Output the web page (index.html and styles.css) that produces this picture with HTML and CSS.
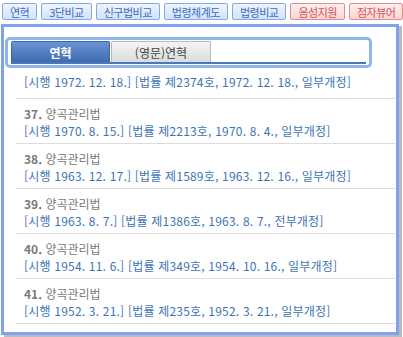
FILE: index.html
```html
<!DOCTYPE html>
<html lang="ko">
<head>
<meta charset="utf-8">
<link rel="stylesheet" href="styles.css">
</head>
<body>
<div class="toolbar">
  <span class="btn">연혁</span>
  <span class="btn">3단비교</span>
  <span class="btn">신구법비교</span>
  <span class="btn">법령체계도</span>
  <span class="btn">법령비교</span>
  <span class="btn red">음성지원</span>
  <span class="btn red">점자뷰어</span>
</div>
<div class="popup">
  <div class="tabbox">
    <div class="tabs">
      <span class="tab active">연혁</span>
      <span class="tab">(영문)연혁</span>
    </div>
  </div>
  <ul class="list">
    <li class="item first"><a class="link">[시행 1972. 12. 18.] [법률 제2374호, 1972. 12. 18., 일부개정]</a></li>
    <li class="item"><div class="title"><b>37.</b> 양곡관리법</div><a class="link">[시행 1970. 8. 15.] [법률 제2213호, 1970. 8. 4., 일부개정]</a></li>
    <li class="item"><div class="title"><b>38.</b> 양곡관리법</div><a class="link">[시행 1963. 12. 17.] [법률 제1589호, 1963. 12. 16., 일부개정]</a></li>
    <li class="item"><div class="title"><b>39.</b> 양곡관리법</div><a class="link">[시행 1963. 8. 7.] [법률 제1386호, 1963. 8. 7., 전부개정]</a></li>
    <li class="item"><div class="title"><b>40.</b> 양곡관리법</div><a class="link">[시행 1954. 11. 6.] [법률 제349호, 1954. 10. 16., 일부개정]</a></li>
    <li class="item"><div class="title"><b>41.</b> 양곡관리법</div><a class="link">[시행 1952. 3. 21.] [법률 제235호, 1952. 3. 21., 일부개정]</a></li>
  </ul>
</div>
</body>
</html>
```
FILE: styles.css
```css
* { box-sizing: border-box; }
html, body { margin: 0; padding: 0; }
body {
  width: 403px;
  height: 337px;
  overflow: hidden;
  background: #ffffff;
  font-family: "Noto Sans CJK KR", sans-serif;
  font-size: 12px;
  position: relative;
}
.toolbar {
  display: flex;
  gap: 4px;
  padding: 3px 0 0 2px;
  height: 21px;
}
.btn {
  flex-shrink: 0;
  white-space: nowrap;
  display: flex;
  align-items: center;
  justify-content: center;
  height: 17px;
  padding: 0 7px;
  border: 1px solid #86a9e6;
  border-radius: 2px;
  background: linear-gradient(#eef4fd, #d3e2f9);
  color: #3d6dc4;
  font-size: 11px;
  letter-spacing: -0.5px;
}
.btn.red {
  border-color: #e08e8e;
  background: linear-gradient(#fdeeee, #f8d6d6);
  color: #d45454;
}
.popup {
  margin: 3px 0 0 1px;
  width: 398px;
  height: 311px;
  border: 3px solid #7fa1ef;
  background: #ffffff;
  box-shadow: 3px 2px 0 #b9bcc0;
  overflow: hidden;
}
.tabbox {
  margin: 10px 0 0 1px;
  width: 367px;
  height: 31px;
  border: 3px solid #8fb5f1;
  border-radius: 5px;
  padding: 1px 3px 1px 3px;
}
.tabs {
  display: flex;
  gap: 1px;
  height: 23px;
  border-bottom: 2px solid #4c77b6;
}
.tab {
  width: 100px;
  height: 21px;
  display: flex;
  align-items: center;
  justify-content: center;
  border: 1px solid #b9b9b9;
  border-bottom: none;
  border-radius: 2px 2px 0 0;
  background: linear-gradient(#f4f4f4, #dcdcdc);
  color: #444;
  font-size: 12px;
}
.tab.active {
  width: 99px;
  border-color: #3e66a6;
  background: linear-gradient(#6a93d2, #3f6db2);
  color: #ffffff;
  font-weight: bold;
}
.list {
  list-style: none;
  margin: 0 0 0 12px;
  padding: 0;
  width: 379px;
}
.item {
  padding: 6px 0 4px 8px;
  border-bottom: 1px solid #dcdcdc;
  line-height: 17px;
}
.item.first {
  padding-top: 5px;
  padding-bottom: 8px;
}
.title {
  color: #7a7a7a;
  font-size: 12px;
}
.title b { font-weight: bold; }
.link {
  display: block;
  color: #3d73b5;
  white-space: nowrap;
  letter-spacing: 0.2px;
}
```
